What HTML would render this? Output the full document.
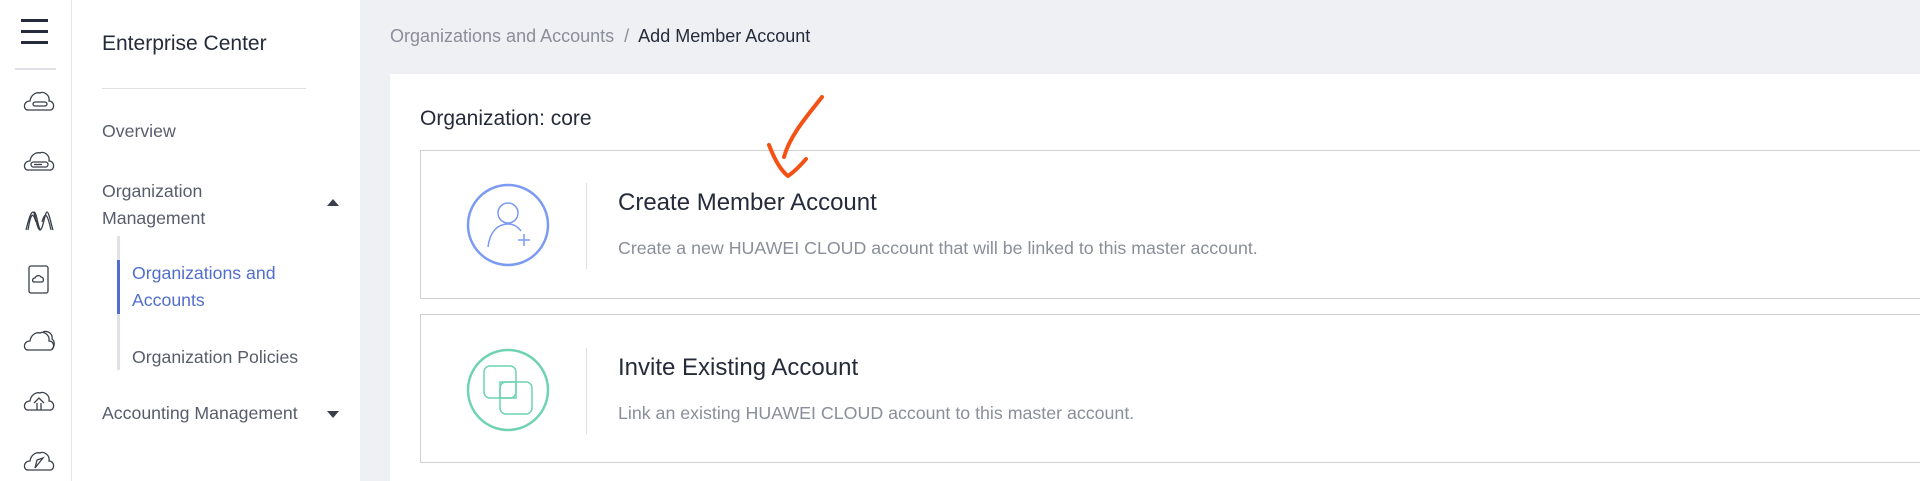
<!DOCTYPE html>
<html><head><meta charset="utf-8"><style>
*{margin:0;padding:0;box-sizing:border-box}
body{width:1920px;height:481px;overflow:hidden;background:#eef0f4;font-family:"Liberation Sans",Arial,sans-serif;position:relative}
.a{position:absolute;white-space:nowrap}
</style></head><body>
<div class="a" style="left:0;top:0;width:72px;height:481px;background:#fff;border-right:1px solid #e4e6ea"></div>
<div class="a" style="left:21px;top:19px;width:27px;height:3px;background:#252b3a"></div>
<div class="a" style="left:21px;top:30px;width:27px;height:3px;background:#252b3a"></div>
<div class="a" style="left:21px;top:41px;width:27px;height:3px;background:#252b3a"></div>
<div class="a" style="left:15px;top:68px;width:41px;height:2px;background:#dfe1e6"></div>
<svg class="a" style="left:0;top:80px" width="72" height="400" fill="none" stroke="#3a3f4b" stroke-width="1.3">
<g transform="translate(25,10)"><path d="M3 20 C-2 20 -2 11 5 11 C6 4 12 2 15 3 C19 1 25 5 24 11 C30 11 30 20 25 20 Z"/><rect x="8" y="12" width="14" height="4" rx="2"/></g>
<g transform="translate(25,70)"><path d="M3 20 C-2 20 -2 11 5 11 C6 4 12 2 15 3 C19 1 25 5 24 11 C30 11 30 20 25 20 Z"/><rect x="6" y="12" width="17" height="5" rx="2.5"/><path d="M9 14.5h8"/></g>
<g transform="translate(25,130)"><path d="M1 20 C4 8 6 2 8 2 C10 2 12 20 15 20 C18 20 20 2 22 2 C24 2 26 14 28 20 M3 20 C6 2 8 2 11 12 M17 12 C20 2 22 2 26 20 M9 2 C12 2 13 20 16 20"/></g>
<g transform="translate(29,186)"><rect x="0" y="0" width="19" height="27" rx="2"/><path d="M5 16 C3 16 3 12 6 12 C7 9 11 9 12 11 C15 11 15 16 13 16Z"/></g>
<g transform="translate(25,250)"><path d="M3 20 C-2 20 -2 11 5 11 C6 4 12 2 15 3 C19 1 25 5 24 11 C30 11 30 20 25 20 Z"/><path d="M18 2 C23 0 28 4 27 9 C30 11 30 16 27 19"/></g>
<g transform="translate(25,310)"><path d="M3 20 C-2 20 -2 11 5 11 C6 4 12 2 15 3 C19 1 25 5 24 11 C30 11 30 20 25 20 Z"/><path d="M9 13 L14 8 L19 13 M12 13v7 M16 13v7"/></g>
<g transform="translate(25,370)"><path d="M3 20 C-2 20 -2 11 5 11 C6 4 12 2 15 3 C19 1 25 5 24 11 C30 11 30 20 25 20 Z"/><path d="M10 18 L12 10 L18 8 Z"/></g>
</svg>
<div class="a" style="left:72px;top:0;width:288px;height:481px;background:#fff"></div>
<div class="a" style="left:102px;top:32px;font-size:21px;color:#252b3a">Enterprise Center</div>
<div class="a" style="left:102px;top:88px;width:204px;height:1px;background:#dfe1e6"></div>
<div class="a" style="left:102px;top:121px;font-size:17.7px;color:#575d6c">Overview</div>
<div class="a" style="left:102px;top:178px;font-size:17.7px;color:#575d6c;line-height:27px">Organization<br>Management</div>
<div class="a" style="left:327px;top:199px;width:0;height:0;border-left:6px solid transparent;border-right:6px solid transparent;border-bottom:7px solid #3a3f4b"></div>
<div class="a" style="left:117px;top:236px;width:3px;height:134px;background:#dfe1e6"></div>
<div class="a" style="left:117px;top:260px;width:3px;height:54px;background:#526ecc"></div>
<div class="a" style="left:132px;top:260px;font-size:17.7px;color:#526ecc;line-height:27px">Organizations and<br>Accounts</div>
<div class="a" style="left:132px;top:347px;font-size:17.7px;color:#575d6c">Organization Policies</div>
<div class="a" style="left:102px;top:403px;font-size:17.7px;color:#575d6c">Accounting Management</div>
<div class="a" style="left:327px;top:411px;width:0;height:0;border-left:6px solid transparent;border-right:6px solid transparent;border-top:7px solid #3a3f4b"></div>

<div class="a" style="left:390px;top:26px;font-size:18px;color:#8a8e99">Organizations and Accounts <span style="margin:0 5px">/</span> <span style="color:#252b3a">Add Member Account</span></div>
<div class="a" style="left:390px;top:74px;width:1530px;height:407px;background:#fff"></div>
<div class="a" style="left:420px;top:107px;font-size:21px;color:#252b3a">Organization: core</div>

<div class="a" style="left:420px;top:150px;width:1510px;height:149px;border:1px solid #d0d0d0"></div>
<div class="a" style="left:420px;top:314px;width:1510px;height:149px;border:1px solid #d0d0d0"></div>
<div class="a" style="left:586px;top:183px;width:1px;height:86px;background:#e0e0e0"></div>
<div class="a" style="left:586px;top:348px;width:1px;height:86px;background:#e0e0e0"></div>
<svg class="a" style="left:466px;top:183px" width="84" height="84" fill="none"><circle cx="42" cy="42" r="40" stroke="#7b9af2" stroke-width="2.5"/><circle cx="42" cy="30" r="10" stroke="#7b9af2" stroke-width="1.5"/><path d="M22 64 C24 48 32 41 42 41 C48 41 52 44 55 48" stroke="#7b9af2" stroke-width="1.5"/><path d="M58 51v12M52 57h12" stroke="#7b9af2" stroke-width="1.5"/></svg>
<svg class="a" style="left:466px;top:348px" width="84" height="84" fill="none"><circle cx="42" cy="42" r="40" stroke="#6fd3b2" stroke-width="2.5"/><rect x="18" y="18" width="32" height="32" rx="6" stroke="#6fd3b2" stroke-width="1.5"/><rect x="34" y="34" width="32" height="32" rx="6" stroke="#6fd3b2" stroke-width="1.5"/><rect x="34" y="34" width="16" height="16" stroke="#6fd3b2" stroke-width="1.5"/></svg>
<div class="a" style="left:618px;top:189px;font-size:24px;color:#252b3a">Create Member Account</div>
<div class="a" style="left:618px;top:238px;font-size:17.8px;color:#8a8e99">Create a new HUAWEI CLOUD account that will be linked to this master account.</div>
<div class="a" style="left:618px;top:354px;font-size:24px;color:#252b3a">Invite Existing Account</div>
<div class="a" style="left:618px;top:403px;font-size:17.8px;color:#8a8e99">Link an existing HUAWEI CLOUD account to this master account.</div>
<svg class="a" style="left:0;top:0" width="1920" height="481" fill="none"><path d="M822 97 C808 115 790 135 784 157" stroke="#f45114" stroke-width="4" stroke-linecap="round"/><path d="M769 145 C774 158 780 170 788 176 C794 172 800 166 806 159" stroke="#f45114" stroke-width="4" stroke-linecap="round" stroke-linejoin="round"/></svg>
</body></html>
